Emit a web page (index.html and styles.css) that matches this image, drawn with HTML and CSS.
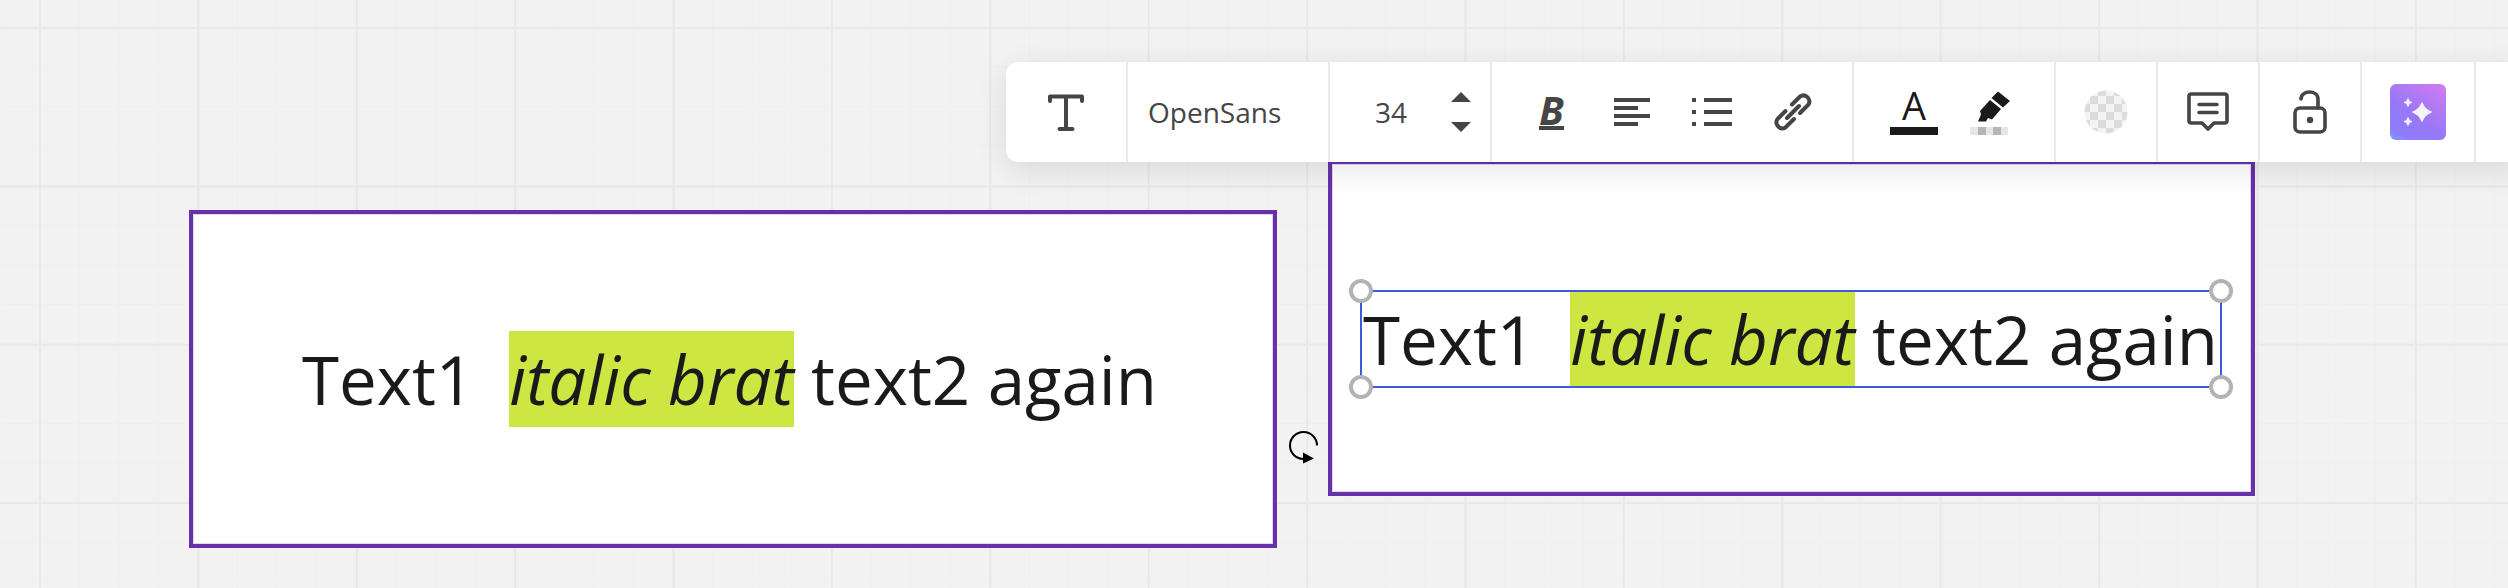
FILE: index.html
```html
<!DOCTYPE html>
<html lang="en">
<head>
    <meta charset="UTF-8">
    <meta name="viewport" content="width=device-width, initial-scale=1.0">
    <title>Text editor board</title>
    <link rel="stylesheet" href="styles.css">
</head>
<body>
    <div class="board">
        <!-- Shape that is not being edited -->
        <div class="frame frame-left">
            <p class="text-line">Text1  <span class="mark">italic brat</span> text2 again</p>
        </div>

        <!-- Shape in edit mode -->
        <div class="frame frame-right"></div>
        <div class="selection">
            <p class="text-line">Text1  <span class="mark">italic brat</span> text2 again</p>
            <span class="handle handle-tl"></span>
            <span class="handle handle-tr"></span>
            <span class="handle handle-bl"></span>
            <span class="handle handle-br"></span>
        </div>

        <svg class="rotate-cursor" width="32" height="36" viewBox="0 0 32 36">
            <path d="M29 15.500A13.500 13.500 0 1 0 15 29" fill="none" stroke="#000" stroke-width="2"/>
            <path d="M15 22.500L26 28.500L15 33.500Z" fill="#000"/>
        </svg>

        <div class="toolbar">
            <div class="tool-group tool-type">
                <svg width="40" height="40" viewBox="0 0 40 40">
                    <path d="M4 9V4.500H36V9M20 4.500V37M13.500 37H26.500" fill="none" stroke="#454545" stroke-width="4" stroke-linecap="round" stroke-linejoin="round"/>
                </svg>
            </div>
            <div class="tool-group tool-font">OpenSans</div>
            <div class="tool-group tool-size">
                <span class="size-value">34</span>
                <span class="size-arrows">
                    <span class="arrow-up"></span>
                    <span class="arrow-down"></span>
                </span>
            </div>
            <div class="tool-group tool-format">
                <span class="bold-icon">B</span>
                <svg class="icon-align" width="36" height="28" viewBox="0 0 36 28">
                    <path d="M0 0H36V4H0ZM0 8H24V12H0ZM0 16H36V20H0ZM0 24H24V28H0Z" fill="#454545"/>
                </svg>
                <svg class="icon-list" width="40" height="28" viewBox="0 0 40 28">
                    <path d="M0 0H4V4H0ZM12 0H40V4H12ZM0 12H4V16H0ZM12 12H40V16H12ZM0 24H4V28H0ZM12 24H40V28H12Z" fill="#454545"/>
                </svg>
                <svg class="icon-link" width="40" height="40" viewBox="0 0 40 40">
                    <path d="M19 12.500L27 4.500A6 6 0 0 1 35.500 12.500L27 21M12.500 19L4.500 27A6 6 0 0 0 12.500 35.500L21 27M14 26L26 14" fill="none" stroke="#454545" stroke-width="4" stroke-linecap="round"/>
                </svg>
            </div>
            <div class="tool-group tool-color">
                <span class="color-a">A</span>
                <svg class="icon-marker" width="42" height="46" viewBox="0 0 42 46">
                    <path d="M28 0.500L40 10L33 16.500L21.500 7ZM20 9L31 18L22 28.500L18 27L16 30.500H8L11 23.500L10 20Z" fill="#1a1a1a"/>
                    <rect x="0" y="36" width="38" height="8" fill="#e6e6e6"/>
                    <rect x="8" y="36" width="8" height="8" fill="#b5b5b5"/>
                    <rect x="23" y="36" width="8" height="8" fill="#b5b5b5"/>
                </svg>
            </div>
            <div class="tool-group tool-opacity">
                <svg width="44" height="44" viewBox="0 0 44 44">
                    <defs>
                        <pattern id="checker" width="16" height="16" patternUnits="userSpaceOnUse" x="-2" y="-2">
                            <rect width="16" height="16" fill="#f3f3f3"/>
                            <rect width="8" height="8" fill="#dcdcdc"/>
                            <rect x="8" y="8" width="8" height="8" fill="#dcdcdc"/>
                        </pattern>
                    </defs>
                    <circle cx="22" cy="22" r="21.500" fill="url(#checker)"/>
                </svg>
            </div>
            <div class="tool-group tool-comment">
                <svg width="42" height="42" viewBox="0 0 42 42">
                    <path d="M4 3H38C39 3 40 4 40 5V30C40 31 39 32 38 32H27L21 38L15 32H4C3 32 2 31 2 30V5C2 4 3 3 4 3Z" fill="none" stroke="#454545" stroke-width="3.600" stroke-linejoin="round"/>
                    <path d="M12 13.500H30M12 21.500H30" stroke="#454545" stroke-width="3.600" stroke-linecap="round"/>
                </svg>
            </div>
            <div class="tool-group tool-lock">
                <svg width="34" height="44" viewBox="0 0 34 44">
                    <rect x="2" y="18" width="30" height="24" rx="5" fill="none" stroke="#454545" stroke-width="3.600"/>
                    <path d="M8 9C8 4.500 12 2 16.500 2C21 2 25 4.500 25 9V18" fill="none" stroke="#454545" stroke-width="3.600" stroke-linecap="round"/>
                    <circle cx="17" cy="30" r="3.200" fill="#454545"/>
                </svg>
            </div>
            <div class="tool-group tool-ai">
                <div class="ai-tile">
                    <svg width="56" height="56" viewBox="0 0 56 56" fill="#f4f4fb" stroke="#f4f4fb" stroke-linejoin="round">
                        <path d="M32 19C33.800 24 36 26.200 41 28C36 29.800 33.800 32 32 37C30.200 32 28 29.800 23 28C28 26.200 30.200 24 32 19Z" stroke-width="1.500"/>
                        <path d="M18 14.500C18.800 17 19.500 17.700 22 18.500C19.500 19.300 18.800 20 18 22.500C17.200 20 16.500 19.300 14 18.500C16.500 17.700 17.200 17 18 14.500Z" stroke-width="1"/>
                        <path d="M18 33.500C18.800 36 19.500 36.700 22 37.500C19.500 38.300 18.800 39 18 41.500C17.200 39 16.500 38.300 14 37.500C16.500 36.700 17.200 36 18 33.500Z" stroke-width="1"/>
                    </svg>
                </div>
            </div>
            <div class="tool-group tool-rest"></div>
        </div>
    </div>
</body>
</html>
```

FILE: styles.css
```css
html, body {
    margin: 0;
    padding: 0;
}

body {
    font-family: "Open Sans", sans-serif;
    background-color: #f2f2f2;
}

/* Board with small and large grid lines */
.board {
    position: relative;
    width: 2508px;
    height: 588px;
    overflow: hidden;
    background-color: #f2f2f2;
    background-image:
        linear-gradient(to right, #e8e8e8 2px, transparent 2px),
        linear-gradient(to bottom, #e8e8e8 2px, transparent 2px),
        linear-gradient(to right, #efefef 1px, transparent 1px),
        linear-gradient(to bottom, #efefef 1px, transparent 1px);
    background-size: 158.4px 158.4px, 158.4px 158.4px, 39.6px 39.6px, 39.6px 39.6px;
    background-position: 39px 27px, 39px 27px, 39px 27px, 39px 27px;
}

.frame {
    position: absolute;
    box-sizing: border-box;
    background: #fff;
    border: 4px solid #6631a9;
    box-shadow: inset 0 0 0 1px #e3d6f3;
}

.frame-left {
    left: 189px;
    top: 210px;
    width: 1088px;
    height: 338px;
    display: flex;
    align-items: center;
    justify-content: center;
    padding-right: 7px;
}

.frame-right {
    left: 1328px;
    top: 160px;
    width: 927px;
    height: 336px;
}

.text-line {
    margin: 0;
    font-size: 67.2px;
    color: #1a1a1a;
    white-space: pre;
}

.mark {
    font-style: italic;
    background-color: #cde641;
    padding: 2.400px 0;
}

.selection {
    position: absolute;
    box-sizing: border-box;
    left: 1360px;
    top: 290px;
    width: 862px;
    height: 98px;
    padding-left: 1px;
    border: 2px solid #3b5bdb;
    display: flex;
    align-items: center;
}

/* Highlight stays inside the blue box */
.selection .mark {
    padding: 1.200px 0;
}

.handle {
    position: absolute;
    box-sizing: border-box;
    width: 24px;
    height: 24px;
    background: #fff;
    border: 4px solid #b3b3b3;
    border-radius: 50%;
}

.handle-tl { left: -13px; top: -13px; }
.handle-tr { right: -13px; top: -13px; }
.handle-bl { left: -13px; bottom: -13px; }
.handle-br { right: -13px; bottom: -13px; }

.rotate-cursor {
    position: absolute;
    left: 1288px;
    top: 430px;
}

/* Floating toolbar, runs off the right edge */
.toolbar {
    position: absolute;
    left: 1006px;
    top: 62px;
    width: 1520px;
    height: 100px;
    display: flex;
    background: #fff;
    border-radius: 12px 0 0 12px;
    box-shadow: 0 8px 32px rgba(0, 0, 0, 0.1);
}

.tool-group {
    box-sizing: border-box;
    height: 100%;
    display: flex;
    align-items: center;
    justify-content: center;
    border-right: 2px solid #e9e9ee;
    color: #454545;
}

.tool-type { width: 122px; }
.tool-font {
    width: 202px;
    padding-left: 20px;
    justify-content: flex-start;
    font-size: 28px;
}
.tool-size {
    width: 162px;
    padding-left: 45px;
    justify-content: flex-start;
}
.tool-format {
    width: 362px;
    padding-left: 47px;
    justify-content: flex-start;
}
.tool-color {
    width: 202px;
    padding-left: 36px;
    justify-content: flex-start;
}
.tool-opacity { width: 102px; }
.tool-comment { width: 102px; }
.tool-lock { width: 102px; }
.tool-ai { width: 114px; }
.tool-rest { flex: 1; border-right: none; }

.size-value {
    font-size: 28px;
    margin-right: 44px;
}

.size-arrows {
    display: flex;
    flex-direction: column;
    gap: 20px;
}

.arrow-up, .arrow-down {
    width: 0;
    height: 0;
    border-left: 10px solid transparent;
    border-right: 10px solid transparent;
}

.arrow-up { border-bottom: 10px solid #454545; }
.arrow-down { border-top: 10px solid #454545; }

.bold-icon {
    width: 25px;
    font-size: 40px;
    font-weight: 700;
    font-style: italic;
    line-height: 33px;
    text-align: center;
    border-bottom: 4px solid #454545;
    margin-top: -2px;
}

.icon-align { margin-left: 50px; }
.icon-list { margin-left: 42px; }
.icon-link { margin-left: 41px; }

.color-a {
    width: 48px;
    font-size: 38px;
    font-weight: 500;
    line-height: 33px;
    padding-bottom: 5px;
    text-align: center;
    color: #1a1a1a;
    border-bottom: 8px solid #1a1a1a;
    margin-right: 32px;
}

.icon-marker { margin-top: 4px; }

.ai-tile {
    width: 56px;
    height: 56px;
    border-radius: 6px;
    background: linear-gradient(215deg, #d37cf0 0%, #9a78f7 55%, #8d7cfb 85%, #7f9cff 100%);
}

.ai-tile svg {
    display: block;
}
```
